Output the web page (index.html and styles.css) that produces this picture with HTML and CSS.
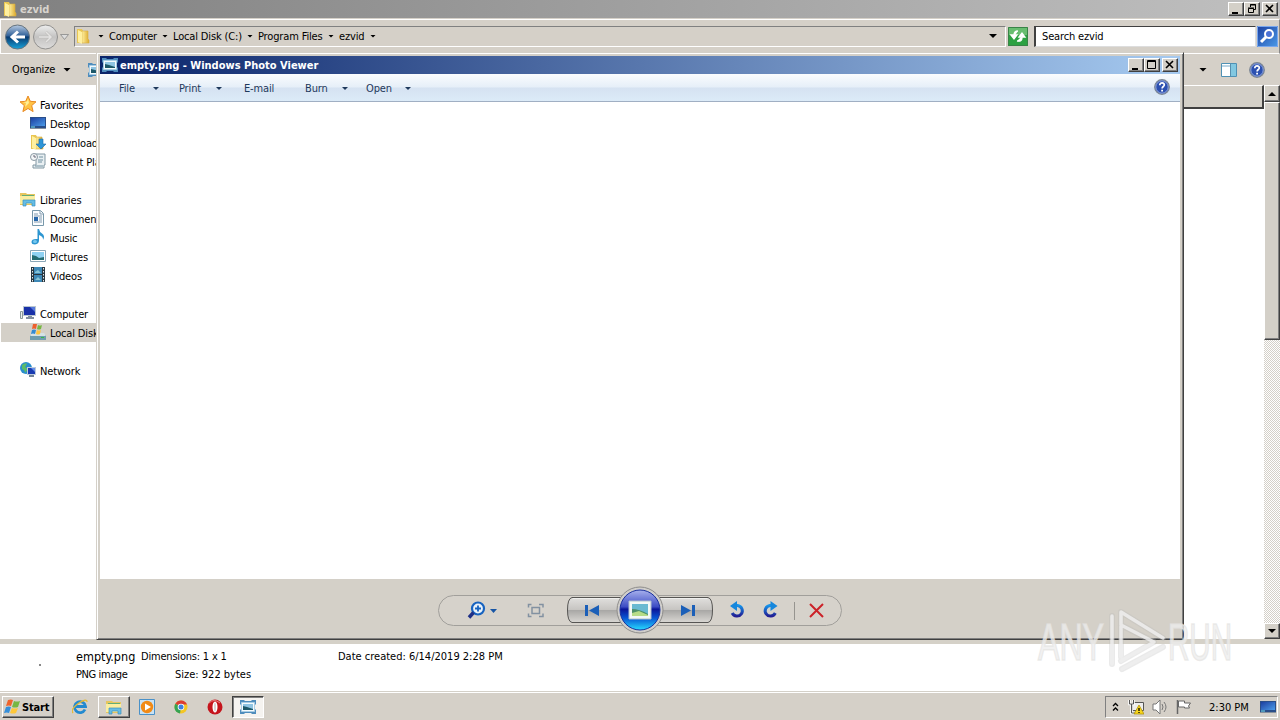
FILE: index.html
```html
<!DOCTYPE html>
<html lang="en">
<head>
    <meta charset="UTF-8">
    <title>empty.png - Windows Photo Viewer</title>
    <link rel="stylesheet" href="styles.css">
</head>
<body>
    <svg class="defs" width="0" height="0">
        <defs>
            <linearGradient id="gold" x1="0" x2="1"><stop offset="0" stop-color="#fff0a0"/><stop offset="1" stop-color="#dca92b"/></linearGradient>
            <linearGradient id="blue" x1="0" y1="0" x2="1" y2="1"><stop offset="0" stop-color="#1c3fa0"/><stop offset="1" stop-color="#4c9be8"/></linearGradient>
            <linearGradient id="rot" x1="0" y1="0" x2="0" y2="1"><stop offset="0" stop-color="#1493ea"/><stop offset="1" stop-color="#221e94"/></linearGradient>
            <linearGradient id="navgo" x1="0" y1="0" x2="0" y2="1"><stop offset="0" stop-color="#b9cbe2"/><stop offset=".45" stop-color="#306199"/><stop offset=".5" stop-color="#093a70"/><stop offset="1" stop-color="#18a3da"/></linearGradient>
            <linearGradient id="navoff" x1="0" y1="0" x2="0" y2="1"><stop offset="0" stop-color="#eeeeee"/><stop offset=".5" stop-color="#c4c3c2"/><stop offset="1" stop-color="#dedddc"/></linearGradient>
        </defs>
        <symbol id="folder" viewBox="0 0 16 16">
            <path d="M2 1h5l1 2v12H2z" fill="#e9c653"/>
            <path d="M7 3h6v8l1 1v3H7z" fill="url(#gold)" stroke="#d8ae42" stroke-width=".6"/>
            <path d="M3 2l4 2v12l-4-2z" fill="#fff0a0"/>
        </symbol>
        <symbol id="photo" viewBox="0 0 16 16">
            <path d="M0 1h4l1 1h6l1-1h4v4l-1 1v4l1 1v4h-4l-1-1H5l-1 1H0v-4l1-1V6L0 5z" fill="#4f8dbd"/>
            <path d="M1.500 3.500h13v9h-13z" fill="#f4fafd" stroke="#a9cde4"/>
            <path d="M3 5h10v6H3z" fill="#8fc4e2"/>
            <path d="M3 7l4 1 6 2v1H3z" fill="#1d5868"/>
        </symbol>
        <symbol id="picture" viewBox="0 0 16 16">
            <path d="M.5 2.500h15v11H.5z" fill="#fff" stroke="#8ba7b8"/>
            <path d="M2 4h12v8H2z" fill="#8fd1f2"/>
            <path d="M2 7l4 1 3 2 5-1v3H2z" fill="#256c72"/>
        </symbol>
        <symbol id="help" viewBox="0 0 16 16">
            <circle cx="8" cy="8" r="7.300" fill="#2c50b0" stroke="#7d8792" stroke-width="1.200"/>
            <circle cx="8" cy="8" r="6.200" fill="none" stroke="#b9c9f1" stroke-width=".7"/>
            <path d="M5.800 6.200C5.800 3 10.500 3.400 10.300 6c-.1 1.500-2.200 1.600-2.200 3.500" fill="none" stroke="#fff" stroke-width="1.700"/>
            <path d="M7.200 10.700h1.800v1.800H7.200z" fill="#fff"/>
        </symbol>
        <symbol id="library" viewBox="0 0 16 16">
            <path d="M0 2h6l1 1h8v11H0z" fill="#e7c65e"/>
            <path d="M0 5h15v8H0z" fill="#fbeea0"/>
            <path d="M2 4.500h12" stroke="#62ad78" stroke-width="1"/>
            <path d="M3 15V9h12v6h-3v-3H6v3z" fill="#66bde4" stroke="#398fbe" stroke-width=".7"/>
        </symbol>
        <symbol id="screen" viewBox="0 0 16 16">
            <path d="M0 2h16v11H0z" fill="#2a4e89"/>
            <path d="M1 3h14v8H1z" fill="url(#blue)"/>
            <path d="M1 12h4" stroke="#74e0ee"/>
            <path d="M0 13h16v1H0z" fill="#86909c"/>
        </symbol>
    </svg>

    <div class="desktop">
        <div class="explorer">
            <div class="explorer-title">
                <svg class="icon"><use href="#folder"/></svg>
                <span class="title-text">ezvid</span>
                <div class="buttons">
                    <span class="win-btn"><svg width="14" height="12"><path d="M3 9h6v2H3z"/></svg></span>
                    <span class="win-btn"><svg width="14" height="12"><path d="M5.500 4V1.500h5v5H9M5 2h6M3.500 5.500h5v4h-5zM3 5h6" fill="none" stroke="#000"/></svg></span>
                    <span class="win-btn close"><svg width="14" height="12"><path d="M3 2l7 7M10 2l-7 7" stroke="#000" stroke-width="1.600"/></svg></span>
                </div>
            </div>

            <div class="address-row">
                <svg class="nav" width="72" height="30" viewBox="0 0 72 30">
                    <path d="M59.500 13.500h8l-4 5z" fill="#ddd" stroke="#888" stroke-width=".8"/>
                    <circle cx="16.500" cy="16" r="12" fill="url(#navgo)" stroke="#66747e"/>
                    <path d="M24 16H12M17 10.500L11 16l6 5.500" fill="none" stroke="#fff" stroke-width="3"/>
                    <circle cx="44.500" cy="16" r="12" fill="url(#navoff)" stroke="#92918f"/>
                    <path d="M38 16h11M45 11l5 5-5 5" fill="none" stroke="#bdbbb8" stroke-width="2.500"/>
                    <path d="M38 16h11M45 11l5 5-5 5" fill="none" stroke="#e4e3e2" stroke-width="1.500"/>
                </svg>
                <div class="address">
                    <svg class="icon"><use href="#folder"/></svg>
                    <i class="arrow"></i>
                    <span class="crumb computer">Computer</span><i class="arrow"></i>
                    <span class="crumb disk">Local Disk (C:)</span><i class="arrow"></i>
                    <span class="crumb files">Program Files</span><i class="arrow"></i>
                    <span class="crumb last">ezvid</span><i class="arrow"></i>
                    <i class="arrow big history"></i>
                </div>
                <svg class="refresh" width="20" height="19" viewBox="0 0 20 19">
                    <path d="M0 0h20v19H0z" fill="#2da142"/><path d="M0 0h20v8H0z" fill="#68bd70"/>
                    <path d="M.5.5h19v18H.5z" fill="none" stroke="#398347"/>
                    <path d="M10 4Q6 4 6 8v2M3 8l3 4 3-4zM9 14q5 1 5-3V9M11 10l3-4 3 4z" fill="#fff" stroke="#fff" stroke-width="1.300"/>
                </svg>
                <div class="search">Search ezvid</div>
                <svg class="search-btn" width="21" height="21" viewBox="0 0 21 21">
                    <path d="M0 0h21v21H0z" fill="url(#blue)"/><path d="M.5.5h20v20H.5z" fill="none" stroke="#7aa7ed"/>
                    <circle cx="12" cy="8" r="4" fill="#4a72d6" stroke="#fff" stroke-width="2"/>
                    <path d="M9 11l-5 5" stroke="#fff" stroke-width="3"/>
                </svg>
            </div>

            <div class="commands">
                <span class="organize">Organize</span><i class="arrow big"></i>
                <svg class="icon preview"><use href="#photo"/></svg>
                <div class="commands-right">
                    <i class="arrow big"></i>
                    <svg width="16" height="14" viewBox="0 0 16 14"><path d="M.5.5h15v13H.5z" fill="#fff" stroke="#4f91b4"/><path d="M1 3h9" stroke="#76aaca"/><path d="M10 1h5v12h-5z" fill="#82c8e1"/><path d="M9.500 1v12" stroke="#588fae"/></svg>
                    <svg class="icon"><use href="#help"/></svg>
                </div>
            </div>

            <div class="content">
                <div class="tree">
                    <div class="node root"><svg class="icon" viewBox="0 0 16 16"><path d="M8 0l2.300 5.300 5.700.5-4.300 3.800 1.400 6L8 12.500l-5.100 3.100 1.400-6L0 5.800l5.700-.5z" fill="#ffc244" stroke="#e88923"/><path d="M8 3l1 4-4 4 1-4-3-1 4-.5z" fill="#fff096"/></svg><span>Favorites</span></div>
                    <div class="node"><svg class="icon"><use href="#screen"/></svg><span>Desktop</span></div>
                    <div class="node"><svg class="icon" viewBox="0 0 16 16"><use href="#folder" x="-1" width="16" height="16"/><path d="M9 5h4v5h3l-5 5-5-5h3z" fill="#2e95d7" stroke="#1c6ca8" stroke-width=".6"/></svg><span>Downloads</span></div>
                    <div class="node"><svg class="icon" viewBox="0 0 16 16"><path d="M5 1h10v11h-1v3H3v-3h3V6H5z" fill="#e8eff2" stroke="#8298a4"/><path d="M9 4h4M8 7h5M8 9h4M5 13h8" stroke="#7090a0"/><circle cx="4" cy="4" r="3.500" fill="#f4f6f7" stroke="#8a99a3"/><path d="M4 2v2h2" fill="none" stroke="#667"/></svg><span>Recent Places</span></div>

                    <div class="node root group"><svg class="icon"><use href="#library"/></svg><span>Libraries</span></div>
                    <div class="node"><svg class="icon" viewBox="0 0 16 16"><path d="M2.500.5h8l3 3v12h-11z" fill="#fafdff" stroke="#7898aa"/><path d="M10 1v3h3M4 4h4M4 6h8M9 8h3M9 10h3M4 12h8" fill="none" stroke="#8199ae"/><path d="M4 7h4v4H4z" fill="#2867aa"/></svg><span>Documents</span></div>
                    <div class="node"><svg class="icon" viewBox="0 0 16 16"><path d="M7.500 0h1.500q.5 3 3 4.500 3.500 2.500 1 6.500.5-3.500-4-5v5.500q0 3.500-4 4-3.500 0-3.500-2.500 0-3.500 6-3z" fill="#2d96d1"/><ellipse cx="5" cy="12.500" rx="2" ry="1.500" fill="#78c9ef"/></svg><span>Music</span></div>
                    <div class="node"><svg class="icon"><use href="#picture"/></svg><span>Pictures</span></div>
                    <div class="node"><svg class="icon" viewBox="0 0 16 16"><path d="M1 0h14v15H1z" fill="#293740"/><path d="M4 0h8v7H4zM4 8h8v7H4z" fill="#3d88b6"/><path d="M5 5l3-2 3 3H5zM5 13l3-3 3 3z" fill="#87c5d8"/><path d="M2.500 1v14M13.500 1v14" stroke="#e3e9ec" stroke-dasharray="1.500"/></svg><span>Videos</span></div>

                    <div class="node root group"><svg class="icon" viewBox="0 0 16 16"><path d="M.5 6.500h2v7h-2z" fill="#eee" stroke="#899"/><path d="M3 1h13v10H3z" fill="#bac6cf"/><path d="M4 2h11v8H4z" fill="#1931a8"/><path d="M10 2h5v5z" fill="#5678dc"/><path d="M8 11h4v1h2v2H6v-2h2z" fill="#8290a0"/></svg><span>Computer</span></div>
                    <div class="node selected"><svg class="icon" viewBox="0 0 16 16"><path d="M0 11h16v5H0z" fill="#6f9dae"/><path d="M2 9h12l2 3H0z" fill="#d5e2e5"/><path d="M3 0q2-1 4 0L6 5q-2-1-4 0z" fill="#ed602d"/><path d="M8 1q2 1 4 0l-1 4q-2 1-4 0z" fill="#77b742"/><path d="M2 6q2-1 4 0l-1 4q-2-1-4 0z" fill="#338bd2"/><path d="M7 6q2 1 4 0l-1 4q-2 1-4 0z" fill="#ffc43c"/><path d="M11 13.500h3" stroke="#36ba45"/></svg><span>Local Disk (C:)</span></div>

                    <div class="node root group"><svg class="icon" viewBox="0 0 16 16"><circle cx="6" cy="6" r="6" fill="#298dce"/><path d="M2 3q4-3 5-1L5 5l3 2-3 4q0-3-3-4z" fill="#5bbb68"/><path d="M7 5h9v8H7z" fill="#bdcadb"/><path d="M8 6h7v6H8z" fill="#183bb1"/><path d="M11 6h4v4z" fill="#648ee8"/><path d="M9 13h5v2H9z" fill="#728497"/></svg><span>Network</span></div>
                </div>
                <div class="files-pane">
                    <div class="column-head"></div>
                </div>
                <div class="scrollbar">
                    <span class="scroll-btn"><i class="arrow big up"></i></span>
                    <span class="thumb"></span>
                    <span class="scroll-btn end"><i class="arrow big"></i></span>
                </div>
            </div>

            <div class="details">
                <div class="thumbnail"><i></i></div>
                <div class="detail-row">
                    <span class="file-name">empty.png</span><span class="dimensions">Dimensions: 1 x 1</span><span class="created">Date created: 6/14/2019 2:28 PM</span>
                </div>
                <div class="detail-row">
                    <span class="file-type">PNG image</span><span class="size">Size: 922 bytes</span>
                </div>
            </div>
        </div>

        <div class="viewer">
            <div class="viewer-title">
                <svg class="icon"><use href="#photo"/></svg>
                <span class="title-text">empty.png - Windows Photo Viewer</span>
                <div class="buttons">
                    <span class="win-btn"><svg width="14" height="12"><path d="M3 9h6v2H3z"/></svg></span>
                    <span class="win-btn"><svg width="14" height="12"><path d="M2.500 1.500h8v8h-8zM2 2.500h9" fill="none" stroke="#000"/></svg></span>
                    <span class="win-btn close"><svg width="14" height="12"><path d="M3 2l7 7M10 2l-7 7" stroke="#000" stroke-width="1.600"/></svg></span>
                </div>
            </div>
            <div class="menu">
                <span class="m-file">File</span><i class="arrow"></i>
                <span class="m-print">Print</span><i class="arrow"></i>
                <span class="m-email">E-mail</span>
                <span class="m-burn">Burn</span><i class="arrow"></i>
                <span class="m-open">Open</span><i class="arrow"></i>
                <svg class="icon"><use href="#help"/></svg>
            </div>
            <div class="canvas"></div>
            <div class="controls">
                <svg width="406" height="50" viewBox="0 0 406 50">
                    <defs>
                        <linearGradient id="metal" x1="0" y1="0" x2="0" y2="1"><stop offset="0" stop-color="#e1e0de"/><stop offset=".48" stop-color="#c7c5c2"/><stop offset=".52" stop-color="#a9a8a6"/><stop offset="1" stop-color="#d9d7d3"/></linearGradient>
                        <linearGradient id="orb" x1="0" y1="0" x2="0" y2="1"><stop offset="0" stop-color="#a8b1ed"/><stop offset=".42" stop-color="#3c4cc4"/><stop offset=".48" stop-color="#0a1599"/><stop offset=".7" stop-color="#0755d4"/><stop offset="1" stop-color="#28ddff"/></linearGradient>
                    </defs>
                    <rect x="1.500" y="10.500" width="403" height="30" rx="15" fill="#d6d2cb" stroke="#a19f9b"/>
                    <path d="M135 12.500h136q4.500 1 4.500 12.500t-4.500 12.500H135q-4.500-1-4.500-12.500t4.500-12.500z" fill="url(#metal)" stroke="#565553"/>
                    <path d="M136 13.500h134" stroke="#eeeeec"/>
                    <circle cx="203" cy="25" r="23" fill="#d0cecb" stroke="#8e8d8b"/>
                    <circle cx="203" cy="25" r="20" fill="url(#orb)" stroke="#1a319f"/>
                    <path d="M192 16h22v18h-22z" fill="#f3f8f5" stroke="#b2c1cc"/>
                    <path d="M195 19h16v12h-16z" fill="#69bad1"/><path d="M195 24q7 0 16 5v2h-16z" fill="#4e9068"/><path d="M195 28l7-2 9 4v1h-16z" fill="#b7dc87"/>
                    <g fill="none" stroke="#1763c0" stroke-width="2.200"><circle cx="41" cy="23.500" r="6" fill="#e9f2fa"/><path d="M38 23.500h6M41 20.500v6" stroke-width="1.800"/><path d="M36.500 27.500l-4.500 5" stroke="#1e2f87" stroke-width="3.500"/></g>
                    <path d="M53 24h7l-3.500 4z" fill="#1755a5"/>
                    <g fill="none" stroke="#8291a1" stroke-width="1.500"><path d="M95 22.500h7.500v6H95z"/><path d="M91.500 22.500v-3h3M102 19.500h4v3M91.500 28.500v3h3M102 31.500h4v-3"/></g>
                    <path d="M148 20h3v11h-3zM162 20v11l-10-5.500zM244 20v11l10-5.500zM255 20h3v11h-3z" fill="#1b5fb8"/>
                    <g id="turn"><path d="M299 20.500h1.500a5.300 5.300 0 1 1-5.300 7.500" fill="none" stroke="url(#rot)" stroke-width="3"/><path d="M300 16v10l-7-5z" fill="#1687dc"/></g>
                    <use href="#turn" transform="matrix(-1 0 0 1 633.500 0)"/>
                    <path d="M357.500 17v18" stroke="#96948f"/>
                    <path d="M373 19l13 13M386 19l-13 13" stroke="#cc2229" stroke-width="2"/>
                </svg>
            </div>
        </div>

        <svg class="watermark" width="200" height="66" viewBox="0 0 200 66">
            <g fill="#eeeeee" fill-opacity=".8" stroke="#e4e3e1" stroke-opacity=".7" stroke-width="1.600">
                <text x="3" y="52" textLength="66" lengthAdjust="spacingAndGlyphs">ANY</text>
                <text x="133" y="52" textLength="64" lengthAdjust="spacingAndGlyphs">RUN</text>
            </g>
            <g fill="none" stroke-linejoin="round" stroke-linecap="round">
                <path d="M77 8v48M86 17V4l42 26M86 17v32M86 17l33 17-33 19M128 39L87 61" stroke="#bbb" stroke-opacity=".3" stroke-width="6"/>
                <path d="M77 8v48M86 17V4l42 26M86 17v32M86 17l33 17-33 19M128 39L87 61" stroke="#eee" stroke-opacity=".85" stroke-width="3.500"/>
            </g>
        </svg>

        <div class="taskbar">
            <div class="start">
                <svg width="17" height="16" viewBox="0 0 17 16"><path d="M4 1q3-1 5 0L7 7q-2-1-5 0z" fill="#ef642d"/><path d="M10 2q3 1 6 0l-2 6q-3 1-6 0z" fill="#76b744"/><path d="M2 8q3-1 5 0l-2 6q-2-1-5 0z" fill="#368fda"/><path d="M8 9q3 1 6 0l-2 5q-3 1-6 0z" fill="#ffc839"/></svg>
                <span>Start</span>
            </div>
            <div class="task"><svg class="icon" viewBox="0 0 16 16"><path d="M13 10.500A5.500 5.500 0 1 1 13.500 7.500H4" fill="none" stroke="#238ad0" stroke-width="2.800"/><path d="M1 14Q-2 10 7 4q8-5 8-1" fill="none" stroke="#e4ba37" stroke-width="1.300"/></svg></div>
            <div class="task raised"><svg class="icon"><use href="#library"/></svg></div>
            <div class="task"><svg class="icon" viewBox="0 0 16 16"><path d="M.5.5h15v15H.5z" fill="#c9e2f4" stroke="#4a91c8"/><circle cx="8" cy="8" r="6.200" fill="#f18a16"/><path d="M6 4.500l6 3.500-6 3.500z" fill="#fff"/></svg></div>
            <div class="task"><svg class="icon" viewBox="0 0 16 16"><circle cx="8" cy="8" r="6.500" fill="#f4c623"/><path d="M8 8L2.300 4.800A6.500 6.500 0 0 1 14 5.500H8z" fill="#dc3c33"/><path d="M8 8l-1 6.500A6.500 6.500 0 0 1 2.300 4.800z" fill="#36a353"/><circle cx="8" cy="8" r="3.300" fill="#fff"/><circle cx="8" cy="8" r="2.500" fill="#3e80df"/></svg></div>
            <div class="task"><svg class="icon" viewBox="0 0 16 16"><circle cx="8" cy="8" r="7.500" fill="#c5141c"/><path d="M2 4q5-5 11 0" fill="none" stroke="#ec8585"/><ellipse cx="8" cy="8" rx="2.500" ry="5.500" fill="#fff"/><ellipse cx="8" cy="8" rx="1" ry="4.500" fill="#d8d1d1"/></svg></div>
            <div class="task active"><svg class="icon"><use href="#photo"/></svg></div>
            <div class="tray">
                <svg class="chevrons" width="7" height="10"><path d="M1 4l2.500-2.500L6 4M1 8.500L3.500 6 6 8.500" fill="none" stroke="#000" stroke-width="1.300"/></svg>
                <svg class="icon" viewBox="0 0 16 16"><path d="M4.500 3.500h11v8h-11z" fill="#eee" stroke="#555"/><path d="M1.500 1v4h4V1M3.500 5v9h7" fill="none" stroke="#fff" stroke-width="2.500"/><path d="M1.500 1v4h4V1M3.500 5v9h7" fill="none" stroke="#555"/><path d="M11 6l5 9H6z" fill="#f7d51c" stroke="#a78b00" stroke-width=".7"/><path d="M11 9v3M11 13v1" stroke="#000" stroke-width="1.300"/></svg>
                <svg class="icon" viewBox="0 0 16 16"><path d="M1 5h3l4-4v14l-4-4H1z" fill="#fff" stroke="#777"/><path d="M10 5q2 3 0 6M12 3q4 5 0 10" fill="none" stroke="#777"/></svg>
                <svg class="icon" viewBox="0 0 16 16"><path d="M1.500 1v14" stroke="#666" stroke-width="1.500"/><path d="M2.500 2h6v2h6l-2 3 1 2h-5V8h-6z" fill="#fff" stroke="#666"/></svg>
                <span class="clock">2:30 PM</span>
                <svg class="icon"><use href="#screen"/></svg>
            </div>
        </div>
    </div>
</body>
</html>
```

FILE: styles.css
```css
* {
    box-sizing: border-box;
}
body {
    margin: 0;
    font-family: "DejaVu Sans Condensed", "DejaVu Sans", sans-serif;
    font-stretch: condensed;
    font-size: 11px;
    letter-spacing: -0.15px;
    line-height: 19px;
    color: #000;
    white-space: nowrap;
}
svg {
    display: block;
    flex: none;
}
.defs {
    position: absolute;
}
.icon {
    width: 16px;
    height: 16px;
    flex: none;
}
.desktop {
    position: relative;
    width: 1280px;
    height: 720px;
    overflow: hidden;
    background: #d5d0c8;
}
.arrow {
    flex: none;
    width: 6px;
    height: 3px;
    background: currentColor;
    clip-path: polygon(0 0, 100% 0, 50% 100%);
}
.arrow.big {
    width: 8px;
    height: 4px;
}
.arrow.up {
    transform: rotate(180deg);
}

/* title bars */
.explorer-title,
.viewer-title {
    display: flex;
    align-items: center;
    height: 18px;
    padding: 0 2px 0 2px;
    background: linear-gradient(to right, #808080, #c0c0c0);
}
.title-text {
    margin-left: 2px;
    color: #d8d4ce;
    font-weight: bold;
    letter-spacing: 0;
}
.buttons {
    display: flex;
    margin-left: auto;
}
.win-btn {
    width: 16px;
    height: 14px;
    background: #d4d0c8;
    border: 1px solid;
    border-color: #fff #404040 #404040 #fff;
    box-shadow: inset -1px -1px #808080;
}
.win-btn.close {
    margin-left: 2px;
}

/* explorer */
.address-row {
    display: flex;
    align-items: center;
    height: 35px;
    margin-top: 1px;
    padding-bottom: 1px;
    border: 1px solid #fff;
    border-right: 1px solid #888;
}
.address {
    display: flex;
    align-items: center;
    width: 932px;
    height: 21px;
    margin-left: 1px;
    border: 1px solid #808080;
    border-right-color: #fff;
    border-bottom-color: #fff;
}
.address > .icon + .arrow {
    margin-left: 7px;
}
.crumb {
    margin-left: 5px;
}
.computer {
    width: 53px;
}
.disk {
    width: 74px;
}
.files {
    width: 70px;
}
.last {
    width: 31px;
}
.address > .history {
    margin-left: auto;
    margin-right: 8px;
}
.refresh {
    margin-left: 2px;
}
.search {
    width: 222px;
    height: 21px;
    margin-left: 6px;
    padding-left: 6px;
    background: #fff;
    border: 1px solid #404040;
    border-right-color: #ddd;
    border-bottom-color: #ddd;
    border-left-width: 2px;
}
.search-btn {
    margin-left: 1px;
}
.commands {
    display: flex;
    align-items: center;
    height: 31px;
    padding: 0 15px 0 12px;
}
.organize {
    width: 51px;
}
.preview {
    margin-left: 17px;
}
.commands-right {
    display: flex;
    align-items: center;
    gap: 14px;
    margin-left: auto;
}
.commands-right .icon {
    margin-left: -2px;
}
.content {
    display: flex;
    height: 554px;
    background: #fff;
}
.tree {
    width: 96px;
    padding: 10px 0 0 1px;
    overflow: hidden;
}
.node {
    display: flex;
    height: 19px;
    padding: 1px 0 0 29px;
}
.node span {
    margin-left: 4px;
}
.node.root {
    padding-left: 19px;
}
.node.group {
    margin-top: 19px;
}
.node.selected {
    background: #d4d0c8;
}
.files-pane {
    flex: 1;
}
.column-head {
    height: 24px;
    background: #d4d0c8;
    border: solid #404040;
    border-width: 0 2px 2px 0;
    border-top: 1px solid #fff;
}
.scrollbar {
    display: flex;
    flex-direction: column;
    width: 16px;
    background: repeating-conic-gradient(#d4d0c8 0 25%, #fff 0 50%) 0 0 / 2px 2px;
}
.scroll-btn,
.thumb {
    background: #d4d0c8;
    border: 1px solid;
    border-color: #fff #404040 #404040 #fff;
    box-shadow: inset -1px -1px #808080;
}
.scroll-btn {
    display: flex;
    align-items: center;
    justify-content: center;
    height: 17px;
}
.scroll-btn.end {
    height: 16px;
    margin-top: auto;
}
.thumb {
    height: 238px;
}
.details {
    display: grid;
    grid-template-columns: 76px 1fr;
    grid-template-rows: 18px 18px;
    height: 53px;
    padding-top: 3px;
    letter-spacing: 0;
    background: #fff;
    border-top: 5px solid #d5d1c8;
}
.thumbnail {
    grid-row: span 2;
    padding: 17px 0 0 39px;
}
.thumbnail i {
    display: block;
    width: 2px;
    height: 2px;
    background: #888;
}
.detail-row {
    display: flex;
}
.file-name {
    width: 65px;
    font-size: 12.5px;
}
.dimensions {
    width: 197px;
    letter-spacing: -0.2px;
}
.file-type {
    width: 99px;
    letter-spacing: -0.4px;
}

/* photo viewer */
.viewer {
    position: absolute;
    left: 96px;
    top: 52px;
    width: 1088px;
    height: 588px;
    padding: 3px 2px 0 3px;
    background: #d4d0c8;
    border: 1px solid;
    border-color: #d4d0c8 #404040 #404040 #d4d0c8;
    box-shadow: inset 1px 1px #fff, inset -1px -1px #808080;
}
.viewer-title {
    width: 1080px;
    background: linear-gradient(to right, #0a246a, #a6caf0);
}
.viewer-title .title-text {
    color: #fff;
}
.menu {
    display: flex;
    align-items: center;
    width: 1080px;
    height: 28px;
    padding: 2px 10px 0 19px;
    color: #1e395b;
    background: linear-gradient(#fafcfe 0%, #e6eff8 48%, #d5e2f1 52%, #dcebf8 100%);
    border-bottom: 1px solid #a0afc3;
}
.menu .icon {
    margin-top: -3px;
    margin-left: auto;
}
.m-file {
    width: 34px;
}
.m-print {
    width: 37px;
    margin-left: 20px;
}
.m-email {
    width: 61px;
    margin-left: 22px;
}
.m-burn {
    width: 37px;
}
.m-open {
    width: 39px;
    margin-left: 18px;
}
.canvas {
    width: 1080px;
    height: 477px;
    background: #fff;
}
.controls {
    display: flex;
    justify-content: center;
    width: 1080px;
    padding-top: 6px;
}

.watermark {
    position: absolute;
    left: 1035px;
    top: 608px;
    font-family: "Liberation Sans", sans-serif;
    font-size: 51px;
}

/* taskbar */
.taskbar {
    display: flex;
    height: 28px;
    padding: 3px 2px 1px;
    border-top: 1px solid #fff;
    box-shadow: 0 -1px #d4d0c8;
}
.start {
    display: flex;
    align-items: center;
    width: 52px;
    height: 22px;
    margin-right: 10px;
    padding-left: 1px;
    font-weight: bold;
    border: 1px solid;
    border-color: #fff #404040 #404040 #fff;
    box-shadow: inset -1px -1px #808080;
}
.start span {
    margin-left: 1px;
}
.task {
    display: flex;
    align-items: center;
    justify-content: center;
    width: 32px;
    height: 22px;
    margin-right: 1.7px;
    border: 1px solid transparent;
}
.task.raised {
    border-color: #fff #404040 #404040 #fff;
    box-shadow: inset -1px -1px #808080;
}
.task.active {
    background: #f5f3f0;
    border-color: #404040 #fff #fff #404040;
    box-shadow: inset 1px 1px #808080;
}
.tray {
    display: flex;
    align-items: center;
    width: 173px;
    height: 22px;
    margin-left: auto;
    padding-left: 6px;
    border: 1px solid;
    border-color: #808080 #fff #fff #808080;
}
.chevrons {
    margin-right: 9px;
}
.tray .icon {
    margin-right: 8px;
}
.clock {
    width: 43px;
    margin: 0 8px 0 9px;
}
.tray .clock + .icon {
    margin-right: 0;
    margin-left: 0;
}
.tray .clock {
    margin-right: 12px;
    letter-spacing: 0;
    flex: none;
    width: 39px;
}
```
